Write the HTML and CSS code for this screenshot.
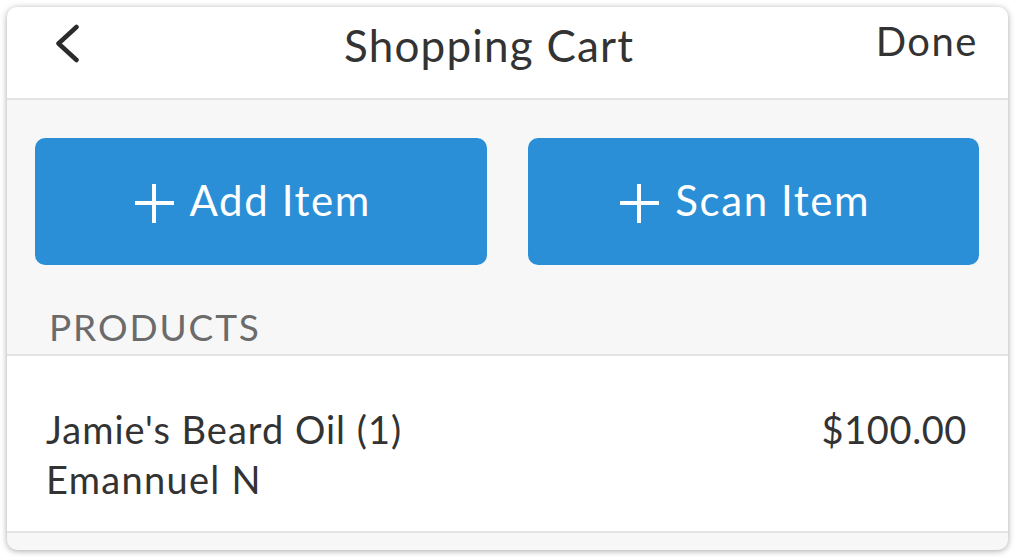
FILE: index.html
```html
<!DOCTYPE html>
<html lang="en">
<head>
  <meta charset="UTF-8" />
  <meta name="viewport" content="width=device-width, initial-scale=1.0"/>
  <title>Shopping Cart</title>
  <link rel="stylesheet" href="styles.css">
</head>
<body>
  <div class="cart">
    <div class="topbar">
      <button class="back" aria-label="Back">
        <svg width="30" height="40" viewBox="0 0 30 40">
          <path d="M20.5 3 L2.5 19.5 L20.5 36" fill="none" stroke="#2b2b2b" stroke-width="4.5" stroke-linecap="round" stroke-linejoin="round"/>
        </svg>
      </button>
      <h1 class="title">Shopping Cart</h1>
      <button class="done">Done</button>
    </div>

    <div class="actions">
      <button class="btn">
        <span class="plus"></span>
        <span>Add Item</span>
      </button>
      <button class="btn">
        <span class="plus"></span>
        <span>Scan Item</span>
      </button>
    </div>

    <div class="section-label">PRODUCTS</div>

    <div class="item">
      <div class="item-info">
        <div class="item-name">Jamie's Beard Oil (1)</div>
        <div class="item-sub">Emannuel N</div>
      </div>
      <div class="item-price">$100.00</div>
    </div>
  </div>
</body>
</html>
```

FILE: styles.css
```css
* {
  box-sizing: border-box;
}

body {
  margin: 0;
  padding: 7px;
  background: #fff;
  font-family: 'Lato', 'Open Sans', sans-serif;
  color: #333;
}

.cart {
  width: 1001px;
  height: 543px;
  background: #f7f7f7;
  border-radius: 10px;
  overflow: hidden;
  box-shadow: 0 1px 6px rgba(0, 0, 0, 0.35);
}

.topbar {
  display: flex;
  align-items: flex-start;
  height: 93px;
  padding: 0 30px 0 49px;
  background: #fff;
  border-bottom: 2px solid #e3e3e3;
}

.back {
  margin-top: 17px;
  padding: 0;
  border: none;
  background: none;
  display: flex;
}

.title {
  margin: 16px 0 0 258px;
  font-size: 44px;
  line-height: 44px;
  font-weight: 400;
  letter-spacing: 1.2px;
  color: #333;
}

.done {
  margin: 14px 0 0 auto;
  padding: 0;
  border: none;
  background: none;
  font-family: inherit;
  font-size: 40px;
  line-height: 40px;
  letter-spacing: 1.5px;
  color: #333;
}

.actions {
  display: flex;
  gap: 41px;
  padding: 38px 29px 0 28px;
}

.btn {
  flex: 1;
  height: 127px;
  display: flex;
  align-items: center;
  justify-content: center;
  gap: 16px;
  padding: 0 16px 4px 0;
  margin: 0;
  border: none;
  border-radius: 10px;
  background: #2a8fd6;
  color: #fff;
  font-family: inherit;
  font-size: 42px;
  letter-spacing: 1.6px;
  cursor: pointer;
}

.plus {
  position: relative;
  width: 39px;
  height: 39px;
  margin-top: 8px;
}

.plus::before,
.plus::after {
  content: "";
  position: absolute;
  background: #fff;
}

.plus::before {
  left: 0;
  right: 0;
  top: 17px;
  height: 4px;
}

.plus::after {
  top: 0;
  bottom: 0;
  left: 17px;
  width: 4px;
}

.section-label {
  height: 91px;
  padding: 43px 0 0 42px;
  font-size: 37px;
  line-height: 37px;
  letter-spacing: 1.9px;
  color: #6b6b6b;
  border-bottom: 2px solid #e3e3e3;
}

.item {
  display: flex;
  justify-content: space-between;
  align-items: flex-start;
  height: 177px;
  padding: 48px 41px 0 39px;
  background: #fff;
  border-bottom: 2px solid #e3e3e3;
}

.item-name,
.item-sub,
.item-price {
  font-size: 38px;
  line-height: 50px;
  letter-spacing: 1px;
  color: #333;
}

.item-sub {
  letter-spacing: 1.3px;
}

.item-price {
  letter-spacing: 0.6px;
}
```
